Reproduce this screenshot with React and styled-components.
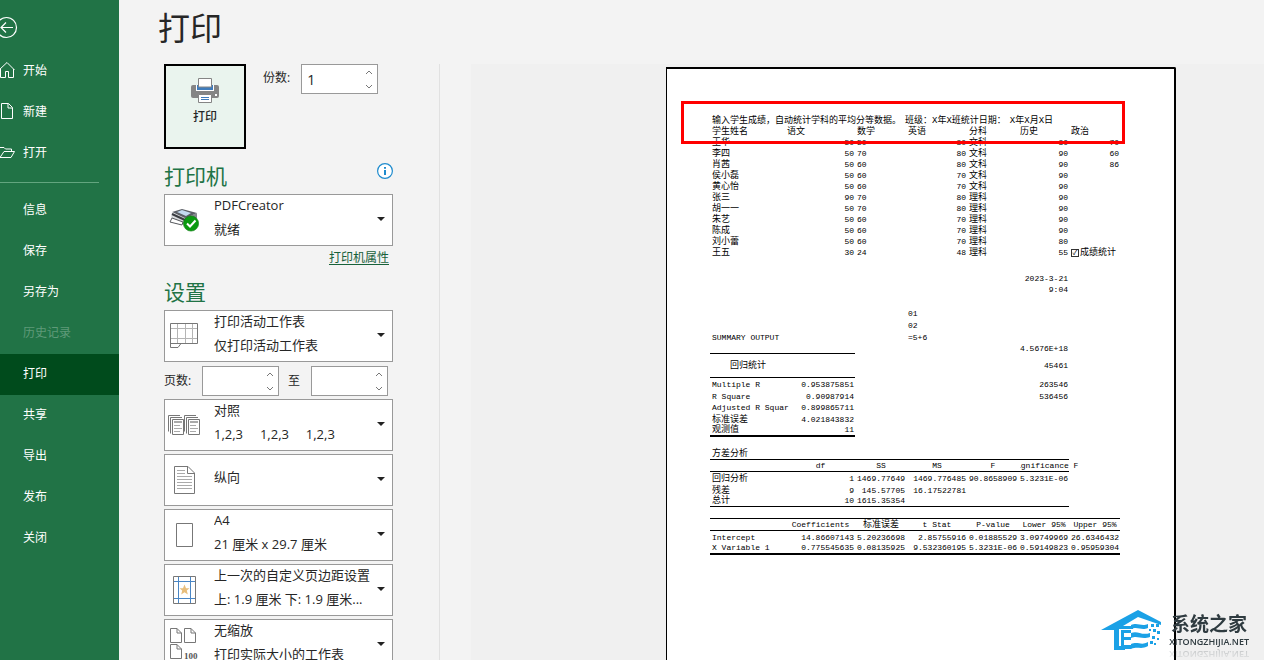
import React, { useState } from 'react';
import styled, { createGlobalStyle } from 'styled-components';

const GlobalStyle = createGlobalStyle`
  * {
    box-sizing: border-box;
  }
  body {
    margin: 0;
    overflow: hidden;
    background: #f3f3f3;
    color: #262626;
    font-family: 'Open Sans', 'Noto Sans CJK SC', sans-serif;
    font-size: 12px;
  }
  button, input, select {
    font: inherit;
    color: inherit;
  }
  svg {
    display: block;
    fill: none;
  }
`;

const Backstage = styled.div`
  display: flex;
  height: 100vh;
  overflow: hidden;
`;

/* Sidebar */
const Sidebar = styled.nav`
  flex: 0 0 119px;
  padding-top: 16px;
  background: #217346;
  color: #fff;
`;

const BackButton = styled.button`
  display: block;
  height: 35px;
  padding: 0;
  border: none;
  background: none;
  cursor: pointer;
  svg {
    margin-bottom: 12px;
  }
`;

const Menu = styled.ul`
  margin: 0;
  padding: 0;
  list-style: none;
`;

const MenuLink = styled.a`
  display: grid;
  grid-template-columns: 18px 1fr;
  column-gap: 5px;
  align-items: center;
  height: 41px;
  padding-bottom: 4px;
  color: ${({ $disabled }) => ($disabled ? '#5f9a79' : '#fff')};
  background: ${({ $active }) => ($active ? '#004b1c' : 'transparent')};
  text-decoration: none;
`;

const Divider = styled.hr`
  width: 99px;
  height: 1px;
  margin: 8px 0 7px;
  border: none;
  background: #63a57f;
`;

/* Print settings */
const Main = styled.main`
  flex: 1;
  min-width: 0;
  display: flex;
  flex-direction: column;
`;

const Title = styled.h1`
  flex: 0 0 64px;
  margin: 0;
  padding-left: 39px;
  font-size: 32px;
  font-weight: 400;
  line-height: 56px;
`;

const Content = styled.div`
  flex: 1;
  min-height: 0;
  display: flex;
`;

const Settings = styled.section`
  flex: 0 0 321px;
  padding: 0 46px 0 45px;
  border-right: 1px solid #e1e1e1;
  overflow: hidden;
`;

const PrintRow = styled.div`
  display: flex;
  align-items: flex-start;
`;

const PrintButton = styled.button`
  display: flex;
  flex-direction: column;
  align-items: center;
  gap: 3px;
  width: 82px;
  height: 85px;
  padding: 12px 0 0;
  border: 2px solid #000;
  background: #eaf4ee;
  font-weight: 500;
  line-height: 20px;
`;

const CopiesLabel = styled.label`
  margin: 0 11px 0 17px;
  line-height: 28px;
`;

const SpinBox = styled.span`
  display: flex;
  width: 77px;
  height: 30px;
  border: 1px solid #999;
  background: #fff;
  input {
    flex: 1;
    min-width: 0;
    padding: 0 0 0 5px;
    border: none;
    outline: none;
    background: none;
    font-size: 14px;
    appearance: textfield;
  }
  input::-webkit-inner-spin-button {
    appearance: none;
    display: none;
  }
`;

const SpinButtons = styled.span`
  display: grid;
  grid-template-rows: 1fr 1fr;
  width: 17px;
  button {
    display: grid;
    place-items: center;
    padding: 0;
    border: none;
    background: none;
  }
`;

const SectionHead = styled.div`
  display: flex;
  justify-content: space-between;
  align-items: flex-start;
  height: 34px;
  margin-top: ${({ $top }) => $top}px;
  h2 {
    margin: 0;
    color: #217346;
    font-size: 21px;
    font-weight: 400;
    line-height: 32px;
  }
`;

const InfoButton = styled.button`
  padding: 3px 0 0;
  border: none;
  background: none;
`;

const LinkRow = styled.div`
  padding-right: 4px;
  text-align: right;
  line-height: 24px;
  a {
    color: #17613a;
    text-underline-offset: 2px;
  }
`;

const Options = styled.div`
  display: flex;
  flex-direction: column;
  gap: 3px;
`;

const OptionBox = styled.div`
  flex: none;
  display: grid;
  grid-template-columns: 38px 1fr 8px;
  grid-template-rows: 50px;
  align-items: center;
  height: 52px;
  padding-right: 7px;
  border: 1px solid #999;
  background: #fff;
  font-size: 13px;
  line-height: 24px;
`;

const OptionIcon = styled.span`
  display: grid;
  place-items: center;
`;

const OptionText = styled.span`
  display: flex;
  flex-direction: column;
  min-width: 0;
  padding: 0 0 6px 11px;
  white-space: pre;
  select {
    width: 100%;
    height: 24px;
    padding: 0;
    border: none;
    outline: none;
    background: none;
    appearance: none;
  }
`;

const PageRange = styled.div`
  display: flex;
  align-items: flex-end;
  height: 31px;
  line-height: 30px;
  label:first-child {
    width: 38px;
  }
  label:nth-of-type(2) {
    width: 32px;
    padding-left: 9px;
  }
`;

/* Preview */
const Preview = styled.section`
  flex: 1;
  min-width: 0;
  margin-left: 31px;
  padding: 3px 0 0 195px;
  background: #f0f0f0;
  overflow: hidden;
`;

const Paper = styled.div`
  position: relative;
  width: 510px;
  height: 100%;
  padding: 45px 0 0 43px;
  border: solid #000;
  border-width: 2px 2px 0 1px;
  border-top-right-radius: 2px;
  background: #fff;
`;

const Highlight = styled.div`
  position: absolute;
  top: 32px;
  left: 14px;
  width: 444px;
  height: 43px;
  border: 3px solid #f00;
`;

const Sheet = styled.table`
  width: 410px;
  table-layout: fixed;
  border-collapse: separate;
  border-spacing: 0;
  color: #000;
  font-family: 'Liberation Mono', 'Noto Sans CJK SC', monospace;
  font-size: 8px;
  line-height: 10px;
`;

const SheetRow = styled.tr`
  height: ${({ $height }) => $height}px;
  vertical-align: ${({ $height }) => ($height > 15 ? 'middle' : 'bottom')};
`;

const Cell = styled.td`
  padding: 0 1px 0 2px;
  border-bottom: ${({ $line }) => $line}px solid #000;
  font-size: ${({ $cjk }) => ($cjk ? 9 : 8)}px;
  text-align: ${({ $align }) => $align};
  vertical-align: inherit;
  white-space: nowrap;
`;

const Caption = styled.span`
  display: flex;
  gap: 4px;
`;

const ClippedHead = styled.span`
  display: block;
  width: 60px;
  overflow: hidden;
  text-indent: -4px;
  text-align: left;
`;

const SheetCheck = styled.label`
  display: flex;
  align-items: center;
  gap: 1px;
  input {
    display: grid;
    place-items: center;
    width: 8px;
    height: 8px;
    margin: 0;
    border: 1px solid #333;
    appearance: none;
  }
  input:checked::before {
    content: '✓';
    font-size: 7px;
    line-height: 6px;
  }
`;

const Watermark = styled.div`
  position: fixed;
  right: 15px;
  bottom: 9px;
  display: flex;
  align-items: center;
  gap: 6px;
`;

const Brand = styled.div`
  display: flex;
  flex-direction: column;
  align-items: center;
  color: #2f3b40;
  -webkit-box-reflect: below 0 linear-gradient(transparent 60%, rgba(0, 0, 0, 0.25));
  strong {
    font-size: 19px;
    line-height: 24px;
  }
  span {
    font-size: 9px;
    font-weight: 600;
    line-height: 12px;
  }
`;

/* Icons */
const BackIcon = () => (
  <svg width="18" height="23" viewBox="0 0 18 23" stroke="#fff">
    <circle cx="6.5" cy="11.5" r="10" strokeWidth="1.2" />
    <path d="M13 11.5H1M6 6.5L1 11.5L6 16.5" strokeWidth="1.2" />
  </svg>
);

const HomeIcon = () => (
  <svg width="18" height="18" viewBox="0 0 18 18" stroke="#fff">
    <path d="M-1 9L7 1.5L14.5 9M0.500 8V16.500H5.500V10.500H8.500V16.500H13.500V8" />
  </svg>
);

const NewIcon = () => (
  <svg width="18" height="18" viewBox="0 0 18 18" stroke="#fff">
    <path d="M1.500 1.500H8.500L12.500 5.500V16.500H1.500ZM8 1.500V6H12.500" />
  </svg>
);

const OpenIcon = () => (
  <svg width="18" height="18" viewBox="0 0 18 18" stroke="#fff">
    <path d="M-1 4.500H4L5.500 6H11.500V8.500M0 14.500L4 8.500H14.500L11 14.500H0" />
  </svg>
);

const PrinterIcon = () => (
  <svg width="28" height="26" viewBox="0 0 28 26">
    <rect x="0" y="7" width="28" height="13" rx="2" fill="#858585" />
    <path d="M5 7H23V13H5Z" fill="#fff" />
    <path d="M6 7H22V12H6Z" fill="#3f7cbc" />
    <path d="M7.500 0.500H20.500V9H7.500Z" fill="#fff" stroke="#858585" />
    <path d="M7.500 16.500H20.500V24.500H7.500Z" fill="#fff" stroke="#858585" />
    <path d="M10 19.500H18M10 21.500H18" stroke="#3f7cbc" />
    <rect x="24" y="16" width="2" height="2" fill="#fff" />
  </svg>
);

const InfoIcon = () => (
  <svg width="16" height="16" viewBox="0 0 16 16">
    <circle cx="8" cy="8" r="7.4" stroke="#1e8bcd" strokeWidth="1.2" fill="#fff" />
    <path d="M8 4V5.700M8 7V12" stroke="#1e8bcd" strokeWidth="2" />
  </svg>
);

const DeviceIcon = () => (
  <svg width="30" height="26" viewBox="0 0 30 26">
    <path d="M3 5L13 2L28 6L16 12Z" fill="#5b5f66" />
    <path d="M8 5L13 3L22 6L17 9Z" fill="#c3daf0" />
    <path d="M3 5L16 11V18L2 11Z" fill="#d9dbde" />
    <path d="M3 7L16 13" stroke="#3a3d42" strokeWidth="2" />
    <path d="M1 15L3 11L14 15L13 18Z" fill="#fff" stroke="#55585c" />
    <path d="M16 11L28 6V11L16 18Z" fill="#85898e" />
    <circle cx="22" cy="16.500" r="7.600" fill="#0a9a10" stroke="#08780d" strokeWidth="0.6" />
    <path d="M18 16.500L21 19.500L26.500 13.500" stroke="#fff" strokeWidth="2" />
  </svg>
);

const SheetIcon = () => (
  <svg width="28" height="26" viewBox="0 0 28 26">
    <path d="M7.500 1V21M15.500 1V21M22.500 1V21M1 5.500H27M1 15.500H27" stroke="#b5b5b5" />
    <path d="M0.500 0.500H27.500V20.500H11L8 24.500H0.500Z" stroke="#777" />
    <path d="M0.500 20.500H11" stroke="#777" />
  </svg>
);

const CollateIcon = () => (
  <svg width="32" height="21" viewBox="0 0 32 21">
    {[0, 16].map((x) => (
      <g key={x} transform={`translate(${x} 0)`}>
        <path d="M0.500 16.500V0.500H12M2.500 18.500V2.500H14" stroke="#777" />
        <path d="M4.500 4.500H15.500V19.500H4.500Z" fill="#fff" stroke="#777" />
        <path d="M6 7H14" stroke="#aaa" strokeWidth="2" />
        <path d="M6 10.500H12M6 13.500H14M6 16.500H12" stroke="#aaa" />
      </g>
    ))}
  </svg>
);

const PortraitIcon = () => (
  <svg width="21" height="28" viewBox="0 0 21 28">
    <path d="M0.500 0.500H14L20.500 7V27.500H0.500Z" stroke="#777" />
    <path d="M13.500 0.500V7.500H20.500" stroke="#777" />
    <path d="M3 4.500H11M3 7.500H11M3 10.500H18M3 13.500H18M3 16.500H18M3 19.500H18M3 22.500H18" stroke="#aaa" />
  </svg>
);

const PaperIcon = () => (
  <svg width="17" height="24" viewBox="0 0 17 24">
    <path d="M0.500 0.500H16.500V23.500H0.500Z" stroke="#777" />
  </svg>
);

const MarginsIcon = () => (
  <svg width="23" height="28" viewBox="0 0 23 28">
    <path d="M0.500 0.500H22.500V27.500H0.500Z" stroke="#777" />
    <path d="M5.500 1V27M17.500 1V27M1 5.500H22M1 22.500H22" stroke="#4a86c5" />
    <path d="M11.500 8.500L13 12.300H16.500L13.800 14.600L14.800 18.500L11.500 16.200L8.200 18.500L9.200 14.600L6.500 12.300H10Z" fill="#e8be7c" />
  </svg>
);

const ScaleIcon = () => (
  <svg width="30" height="34" viewBox="0 0 30 34">
    {['translate(0 0)', 'translate(14 0)', 'translate(0 16)'].map((at) => (
      <path key={at} transform={at} d="M1.500 0.500H8L12.500 5V14.500H1.500ZM8 0.500V5H12.500" stroke="#777" />
    ))}
    <text x="15" y="31" fill="#555" fontFamily="Liberation Serif, serif" fontWeight="700" fontSize="9">100</text>
  </svg>
);

const Caret = () => (
  <svg width="8" height="6" viewBox="0 0 8 6">
    <path d="M0 0H8L4 4Z" fill="#222" />
  </svg>
);

const Chevron = ({ up }) => (
  <svg width="8" height="5" viewBox="0 0 8 5">
    <path d={up ? 'M1 4L4 1L7 4' : 'M1 1L4 4L7 1'} stroke="#777" />
  </svg>
);

const HouseLogo = () => (
  <svg width="62" height="42" viewBox="0 0 62 42" fill="#1ba1e6">
    <path d="M0 21L37 1L60 13V16L37 8L22 17H32V20H18V37H24V41H13V21Z" fill="#1ba1e6" />
    <path d="M20 21H30V24H23V28H30V31H23V36H30V40H20Z" fill="#1ba1e6" />
    <path d="M30 16C37 13 40 18 47 15V19C40 22 37 17 30 20ZM30 24C37 21 40 27 49 24V28C40 31 37 26 30 29V31ZM30 35C37 32 40 37 47 33V37C40 41 37 37 30 40Z" fill="#1ba1e6" />
    <path d="M50 15H53V18H50ZM55 15H58V18H55ZM52 20H55V23H52ZM48 20H50V22H48ZM56 22H59V25H56ZM51 27H54V30H51ZM56 29H58V31H56ZM49 32H52V35H49ZM53 34H55V36H53Z" fill="#1ba1e6" />
  </svg>
);

const primaryMenu = [
  { name: '开始', icon: <HomeIcon /> },
  { name: '新建', icon: <NewIcon /> },
  { name: '打开', icon: <OpenIcon /> },
];

const fileMenu = ['信息', '保存', '另存为', '历史记录', '打印', '共享', '导出', '发布', '关闭'];

const layoutOptions = [
  { label: '排序', value: '对照', hint: '1,2,3     1,2,3     1,2,3', icon: <CollateIcon /> },
  { label: '方向', value: '纵向', icon: <PortraitIcon /> },
  { label: '纸张', value: 'A4', hint: '21 厘米 x 29.7 厘米', icon: <PaperIcon /> },
  { label: '页边距', value: '上一次的自定义页边距设置', hint: '上: 1.9 厘米 下: 1.9 厘米...', icon: <MarginsIcon /> },
  { label: '缩放', value: '无缩放', hint: '打印实际大小的工作表', icon: <ScaleIcon /> },
];

const columns = [75, 70, 51, 61, 51, 51, 51];

// r = right aligned, c = centred, plain strings stay left
const r = (text) => ({ text, align: 'right' });
const c = (text) => ({ text, align: 'center' });

const student = (name, chinese, maths, english, subject, history, politics = '') => ({
  height: 11,
  cells: [name, r(chinese), maths, r(english), subject, r(history), politics],
});

const sheetRows = [
  { height: 11, cells: ['学生姓名', '语文', '数学', '英语', '分科', '历史', '政治'] },
  student('王华', '50', '50', '80', '文科', '80', r('70')),
  student('李四', '50', '70', '80', '文科', '90', r('60')),
  student('肖茜', '50', '60', '80', '文科', '90', r('86')),
  student('侯小磊', '50', '60', '70', '文科', '90'),
  student('黄心怡', '50', '60', '70', '文科', '90'),
  student('张三', '90', '70', '80', '理科', '90'),
  student('胡一一', '50', '70', '80', '理科', '90'),
  student('朱艺', '50', '60', '70', '理科', '90'),
  student('陈成', '50', '60', '70', '理科', '90'),
  student('刘小蕾', '50', '60', '70', '理科', '80'),
  student('王五', '30', '24', '48', '理科', '55', { check: '成绩统计' }),
  { height: 15, cells: [] },
  { height: 11, cells: ['', '', '', '', '', r('2023-3-21')] },
  { height: 11, cells: ['', '', '', '', '', r('9:04')] },
  { height: 12, cells: [] },
  { height: 12, cells: ['', '', '', '01'] },
  { height: 12, cells: ['', '', '', '02'] },
  { height: 12, cells: ['SUMMARY OUTPUT', '', '', '=5+6'] },
  { height: 11, line: 1, span: 2, cells: ['', '', '', '', '', r('4.5676E+18')] },
  { height: 24, line: 1, span: 2, cells: [c('回归统计'), '', '', '', '', r('45461')] },
  { height: 12, cells: ['Multiple R', r('0.953875851'), '', '', '', r('263546')] },
  { height: 12, cells: ['R Square', r('0.90987914'), '', '', '', r('536456')] },
  { height: 11, cells: ['Adjusted R Squar', r('0.899865711')] },
  { height: 12, cells: ['标准误差', r('4.021843832')] },
  { height: 12, line: 2, span: 2, cells: ['观测值', r('11')] },
  { height: 11, cells: [] },
  { height: 12, line: 1, span: 6, cells: ['方差分析'] },
  { height: 12, line: 1, span: 6, cells: ['', c('df'), c('SS'), c('MS'), c('F'), { clipped: 'ignificance F' }] },
  { height: 12, cells: ['回归分析', r('1'), r('1469.77649'), r('1469.776485'), r('90.8658909'), r('5.3231E-06')] },
  { height: 12, cells: ['残差', r('9'), r('145.57705'), r('16.17522781')] },
  { height: 11, line: 1, span: 6, cells: ['总计', r('10'), r('1615.35354')] },
  { height: 12, line: 1, span: 7, cells: [] },
  { height: 12, line: 1, span: 7, cells: ['', c('Coefficients'), c('标准误差'), c('t Stat'), c('P-value'), c('Lower 95%'), c('Upper 95%')] },
  { height: 12, cells: ['Intercept', r('14.86607143'), r('5.20236698'), r('2.85755916'), r('0.01885529'), r('3.09749969'), r('26.6346432')] },
  { height: 12, line: 2, span: 7, cells: ['X Variable 1', r('0.775545635'), r('0.08135925'), r('9.532360195'), r('5.3231E-06'), r('0.59149823'), r('0.95959304')] },
];

const Spinner = ({ id, initial = '' }) => {
  const [value, setValue] = useState(initial);
  const step = (by) => setValue(Math.max(1, Number(value) + by));

  return (
    <SpinBox>
      <input id={id} type="number" value={value} onChange={(e) => setValue(e.target.value)} />
      <SpinButtons>
        <button type="button" aria-label="增加" onClick={() => step(1)}><Chevron up /></button>
        <button type="button" aria-label="减少" onClick={() => step(-1)}><Chevron /></button>
      </SpinButtons>
    </SpinBox>
  );
};

const Option = ({ label, value, hint, icon }) => (
  <OptionBox>
    <OptionIcon>{icon}</OptionIcon>
    <OptionText>
      <select aria-label={label} defaultValue={value}>
        <option>{value}</option>
      </select>
      {hint && <span>{hint}</span>}
    </OptionText>
    <Caret />
  </OptionBox>
);

const SheetCell = ({ cell, line }) => {
  const { text, align = 'left', check, clipped } = typeof cell === 'object' ? cell : { text: cell };
  const cjk = Boolean(check) || /[\u4e00-\u9fff]/.test(text);

  return (
    <Cell $align={align} $line={line} $cjk={cjk}>
      {check && (
        <SheetCheck>
          <input type="checkbox" defaultChecked />
          {check}
        </SheetCheck>
      )}
      {clipped && <ClippedHead>{clipped}</ClippedHead>}
      {text}
    </Cell>
  );
};

const App = () => {
  const [active, setActive] = useState('打印');

  return (
    <>
      <GlobalStyle />
      <Backstage>
        <Sidebar>
          <BackButton type="button" aria-label="返回"><BackIcon /></BackButton>
          <Menu>
            {primaryMenu.map((item) => (
              <li key={item.name}>
                <MenuLink href="#">
                  {item.icon}
                  <span>{item.name}</span>
                </MenuLink>
              </li>
            ))}
          </Menu>
          <Divider />
          <Menu>
            {fileMenu.map((name) => (
              <li key={name}>
                <MenuLink
                  href="#"
                  $active={active === name}
                  $disabled={name === '历史记录'}
                  onClick={() => setActive(name)}
                >
                  <span />
                  <span>{name}</span>
                </MenuLink>
              </li>
            ))}
          </Menu>
        </Sidebar>

        <Main>
          <Title>打印</Title>
          <Content>
            <Settings>
              <PrintRow>
                <PrintButton type="button">
                  <PrinterIcon />
                  打印
                </PrintButton>
                <CopiesLabel htmlFor="copies">份数:</CopiesLabel>
                <Spinner id="copies" initial="1" />
              </PrintRow>

              <SectionHead $top={11}>
                <h2>打印机</h2>
                <InfoButton type="button" aria-label="打印机信息"><InfoIcon /></InfoButton>
              </SectionHead>
              <Option label="打印机" value="PDFCreator" hint="就绪" icon={<DeviceIcon />} />
              <LinkRow><a href="#">打印机属性</a></LinkRow>

              <SectionHead $top={6}>
                <h2>设置</h2>
              </SectionHead>
              <Options>
                <Option label="打印范围" value="打印活动工作表" hint="仅打印活动工作表" icon={<SheetIcon />} />
                <PageRange>
                  <label htmlFor="from">页数:</label>
                  <Spinner id="from" />
                  <label htmlFor="to">至</label>
                  <Spinner id="to" />
                </PageRange>
                {layoutOptions.map((option) => (
                  <Option key={option.label} {...option} />
                ))}
              </Options>
            </Settings>

            <Preview>
              <Paper>
                <Sheet>
                  <colgroup>
                    {columns.map((width, i) => (
                      <col key={i} width={width} />
                    ))}
                  </colgroup>
                  <tbody>
                    <SheetRow $height={12}>
                      <Cell colSpan={7} $align="left" $line={0} $cjk>
                        <Caption>
                          <span>输入学生成绩，自动统计学科的平均分等数据。</span>
                          <span>班级：X年X班统计日期：</span>
                          <span>X年X月X日</span>
                        </Caption>
                      </Cell>
                    </SheetRow>
                    {sheetRows.map((row, i) => (
                      <SheetRow key={i} $height={row.height}>
                        {columns.map((_, col) => (
                          <SheetCell
                            key={col}
                            cell={row.cells[col] ?? ''}
                            line={row.line && col < row.span ? row.line : 0}
                          />
                        ))}
                      </SheetRow>
                    ))}
                  </tbody>
                </Sheet>
                <Highlight />
              </Paper>
            </Preview>
          </Content>
        </Main>
      </Backstage>

      <Watermark>
        <HouseLogo />
        <Brand>
          <strong>系统之家</strong>
          <span>XITONGZHIJIA.NET</span>
        </Brand>
      </Watermark>
    </>
  );
};

export default App;
